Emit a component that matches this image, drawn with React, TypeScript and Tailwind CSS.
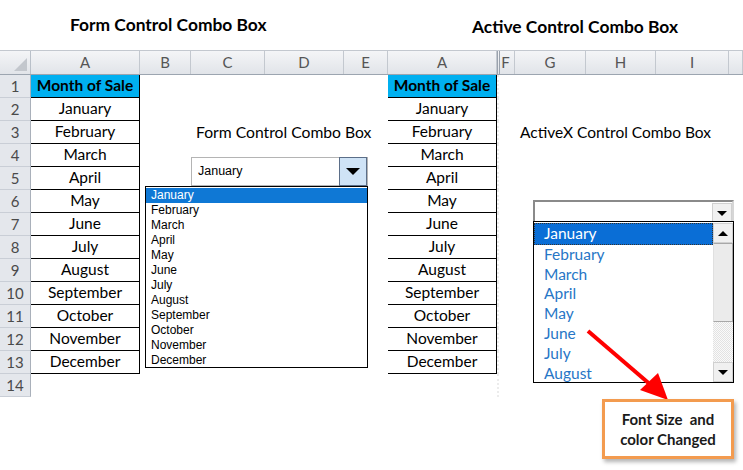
import React from 'react';

const months = [
  'January', 'February', 'March', 'April', 'May', 'June',
  'July', 'August', 'September', 'October', 'November', 'December',
];

const headers = ['', 'A', 'B', 'C', 'D', 'E', 'A', 'F', 'G', 'H', 'I', ''];

const gridCols =
  'grid grid-cols-[31px_109px_51px_74px_79px_44px_109px_18px_71px_70px_73px_14px]';

// column index of the two "Month of Sale" lists
const listCols = [1, 6];

const Cell: React.FC<{ row: number; col: number }> = ({ row, col }) => {
  if (col === 0) {
    return (
      <div className="flex h-[23px] items-center justify-center border-b border-r border-b-[#c9ced6] border-r-[#a9b0ba] bg-[#e4e7ec] text-[15px] text-[#4a4a4a]">
        {row}
      </div>
    );
  }
  if (listCols.includes(col) && row <= 13) {
    if (row === 1) {
      return (
        <div className="flex h-[23px] items-center justify-center border-b border-r border-black bg-[#00b0f0] text-[15.5px] font-bold text-black">
          Month of Sale
        </div>
      );
    }
    return (
      <div className="flex h-[23px] items-center justify-center border-b border-r border-black text-[15.5px] text-black">
        {months[row - 2]}
      </div>
    );
  }
  if (row === 3 && col === 3) {
    return (
      <div className="flex h-[23px] items-center whitespace-nowrap pl-[5px] text-[15.7px] text-black">
        Form Control Combo Box
      </div>
    );
  }
  if (row === 3 && col === 8) {
    return (
      <div className="flex h-[23px] items-center whitespace-nowrap pl-[5px] text-[15.5px] text-black">
        ActiveX Control Combo Box
      </div>
    );
  }
  if (col === 7) {
    return <div className="h-[23px] border-l-2 border-dotted border-l-[#ececec]" />;
  }
  return <div className="h-[23px]" />;
};

const FormCombo: React.FC = () => (
  <>
    <div className="absolute left-[191px] top-[157px] flex h-[29px] w-[177px] items-center border border-[#b4b4b4] bg-white">
      <span className="pl-[6px] font-['Liberation_Sans',sans-serif] text-[12.5px] text-black">January</span>
      <div className="ml-auto flex h-[29px] w-[28px] items-center justify-center border border-[#5b6e88] bg-[#cfe3f6]">
        <div className="h-0 w-0 border-x-[7px] border-t-[7px] border-x-transparent border-t-black" />
      </div>
    </div>
    <div className="absolute left-[145px] top-[186px] h-[182px] w-[223px] border border-black bg-white pt-px font-['Liberation_Sans',sans-serif] text-[12px] leading-[15px] text-black">
      {months.map((m, i) => (
        <div
          key={m}
          className={i === 0 ? 'bg-[#0f78d5] pl-[5px] text-white' : 'pl-[5px]'}
        >
          {m}
        </div>
      ))}
    </div>
  </>
);

const ScrollBtn: React.FC<{ up?: boolean }> = ({ up }) => (
  <div className="flex h-[20px] w-[20px] items-center justify-center border border-[#d0d0d0] bg-[#f0f0f0]">
    {up ? (
      <div className="h-0 w-0 border-x-[5px] border-b-[5px] border-x-transparent border-b-black" />
    ) : (
      <div className="h-0 w-0 border-x-[5px] border-t-[5px] border-x-transparent border-t-black" />
    )}
  </div>
);

const ActiveXCombo: React.FC = () => (
  <>
    <div className="absolute left-[533px] top-[200px] flex h-[22px] w-[201px] border-2 border-b-0 border-[#8a8a8a] border-r-[#d6d6d6] bg-white">
      <div className="ml-auto mt-px">
        <ScrollBtn />
      </div>
    </div>
    <div className="absolute left-[533px] top-[221px] flex h-[162px] w-[201px] border border-black bg-white">
      <div className="flex-1 pt-px text-[15.5px] leading-[19.8px] text-[#2776c6]">
        {months.slice(0, 8).map((m, i) => (
          <div
            key={m}
            className={
              i === 0
                ? 'border border-dotted border-[#333] bg-[#0a6ed6] pl-[9px] text-white'
                : 'pl-[10px]'
            }
          >
            {m}
          </div>
        ))}
      </div>
      <div className="flex w-[20px] flex-col pt-px">
        <ScrollBtn up />
        <div className="h-[79px] w-[20px] border border-[#a8a8a8] border-l-[#e0e0e0] bg-[#ebebeb]" />
        <div className="flex-1 bg-[repeating-conic-gradient(#e2e2e2_0_25%,#fafafa_0_50%)] bg-[length:2px_2px]" />
        <ScrollBtn />
      </div>
    </div>
  </>
);

const Callout: React.FC = () => (
  <>
    <svg className="absolute left-0 top-0" width="743" height="470">
      <line x1="588" y1="331" x2="652" y2="386" stroke="#ff0000" strokeWidth="4" />
      <polygon points="668,400 640,390 658,373" fill="#ff0000" />
    </svg>
    <div className="absolute left-[602px] top-[399px] flex h-[60px] w-[132px] flex-col items-center justify-center border-[3px] border-[#f39b4f] bg-white text-[15px] font-bold leading-[20px] text-[#1a1a1a] shadow-[2px_3px_4px_rgba(0,0,0,0.3)]">
      <span className="whitespace-pre">Font Size  and</span>
      <span>color Changed</span>
    </div>
  </>
);

export default function App() {
  const rows = Array.from({ length: 14 }, (_, i) => i + 1);
  return (
    <div className="relative h-[470px] w-[743px] overflow-hidden bg-white font-['Lato',sans-serif]">
      <div className="flex h-[50px]">
        <div className="w-[388px] pl-[70px] pt-[12px] text-[17.4px] font-bold text-black">
          Form Control Combo Box
        </div>
        <div className="pl-[84px] pt-[14px] text-[17.4px] font-bold text-black">
          Active Control Combo Box
        </div>
      </div>

      <div className="border-t border-[#c3c8cf]">
        <div className={`${gridCols} h-[24px] border-b border-[#9ca5b0] bg-gradient-to-b from-[#f4f5f7] to-[#e1e4e9]`}>
          {headers.map((h, i) => (
            <div
              key={i}
              className={
                i === 0
                  ? 'relative border-r border-[#b9c0c9]'
                  : i === 7
                    ? 'flex items-center justify-center border-l-[3px] border-r border-double border-l-[#9aa2ad] border-r-[#c3c8cf] pr-[3px] text-[15px] text-[#555]'
                    : 'flex items-center justify-center border-r border-[#c3c8cf] text-[15px] text-[#555]'
              }
            >
              {i === 0 ? (
                <div className="absolute bottom-[3px] right-[3px] h-0 w-0 border-b-[13px] border-l-[13px] border-b-[#c3c7cd] border-l-transparent" />
              ) : (
                h
              )}
            </div>
          ))}
        </div>
        {rows.map((r) => (
          <div key={r} className={gridCols}>
            {headers.map((_, c) => (
              <Cell key={c} row={r} col={c} />
            ))}
          </div>
        ))}
      </div>

      <FormCombo />
      <ActiveXCombo />
      <Callout />
    </div>
  );
}
